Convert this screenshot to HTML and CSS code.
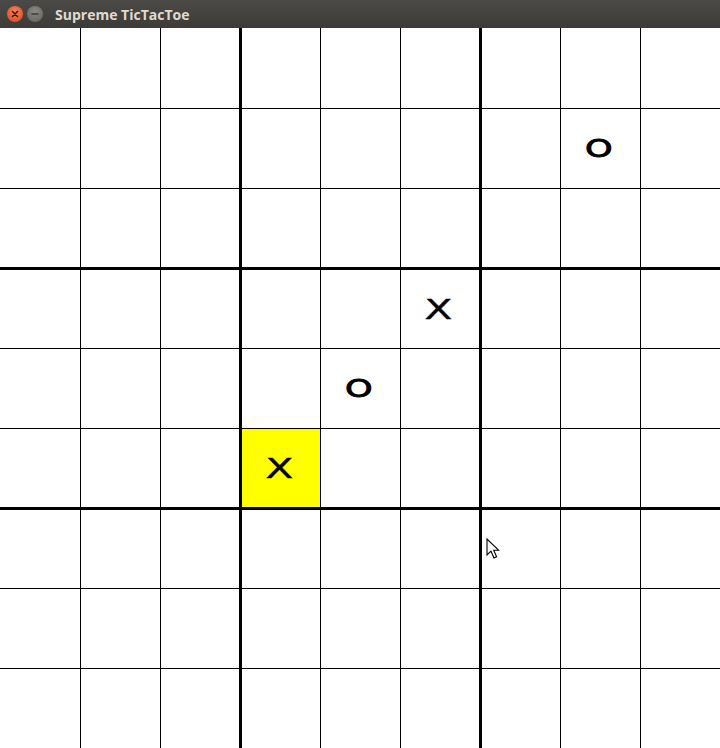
FILE: index.html
```html
<!DOCTYPE html>
<html>
<head>
<meta charset="utf-8">
<title>Supreme TicTacToe</title>
<link rel="stylesheet" href="styles.css">
</head>
<body>
<div class="window">
  <div class="titlebar">
    <div class="btn close"><svg width="16" height="16" viewBox="0 0 16 16"><path d="M5.5 5.5 L10.5 10.5 M10.5 5.5 L5.5 10.5" stroke="#3a1a10" stroke-width="1.6" stroke-linecap="round"/></svg></div>
    <div class="btn min"><svg width="16" height="16" viewBox="0 0 16 16"><path d="M5 8 H11" stroke="#3c3b37" stroke-width="1.6" stroke-linecap="round"/></svg></div>
    <div class="title">Supreme TicTacToe</div>
  </div>
  <div class="board">
    <div class="row"><div class="c"></div><div class="c"></div><div class="c pre"></div><div class="c thick"></div><div class="c"></div><div class="c pre"></div><div class="c thick"></div><div class="c"></div><div class="c"></div></div>
    <div class="row r"><div class="c"></div><div class="c"></div><div class="c pre"></div><div class="c thick"></div><div class="c"></div><div class="c pre"></div><div class="c thick"></div><div class="c"><span class="o">O</span></div><div class="c"></div></div>
    <div class="row r pre"><div class="c"></div><div class="c"></div><div class="c pre"></div><div class="c thick"></div><div class="c"></div><div class="c pre"></div><div class="c thick"></div><div class="c"></div><div class="c"></div></div>
    <div class="row thick"><div class="c"></div><div class="c"></div><div class="c pre"></div><div class="c thick"></div><div class="c"></div><div class="c pre"><span class="x">X</span></div><div class="c thick"></div><div class="c"></div><div class="c"></div></div>
    <div class="row r"><div class="c"></div><div class="c"></div><div class="c pre"></div><div class="c thick"></div><div class="c"><span class="o">O</span></div><div class="c pre"></div><div class="c thick"></div><div class="c"></div><div class="c"></div></div>
    <div class="row r pre"><div class="c"></div><div class="c"></div><div class="c pre"></div><div class="c thick hl"><span class="x">X</span></div><div class="c"></div><div class="c pre"></div><div class="c thick"></div><div class="c"></div><div class="c"></div></div>
    <div class="row thick"><div class="c"></div><div class="c"></div><div class="c pre"></div><div class="c thick"></div><div class="c"></div><div class="c pre"></div><div class="c thick"></div><div class="c"></div><div class="c"></div></div>
    <div class="row r"><div class="c"></div><div class="c"></div><div class="c pre"></div><div class="c thick"></div><div class="c"></div><div class="c pre"></div><div class="c thick"></div><div class="c"></div><div class="c"></div></div>
    <div class="row r"><div class="c"></div><div class="c"></div><div class="c pre"></div><div class="c thick"></div><div class="c"></div><div class="c pre"></div><div class="c thick"></div><div class="c"></div><div class="c"></div></div>
  </div>
  <svg class="cursor" width="14" height="22" viewBox="0 0 14 22"><path d="M1 1 L1 17 L5 13.2 L8 20 L10.6 18.8 L7.7 12.3 L12.8 12.3 Z" fill="#fff" stroke="#000" stroke-width="1.1" stroke-linejoin="miter"/></svg>
</div>
</body>
</html>
```
FILE: styles.css
```css
html, body {
  margin: 0;
  padding: 0;
  background: #ffffff;
}
.window {
  position: relative;
  width: 720px;
  height: 748px;
  overflow: hidden;
}
.titlebar {
  height: 28px;
  box-sizing: border-box;
  background: linear-gradient(#4b4a46, #3c3b37);
  display: flex;
  align-items: center;
  padding-left: 7px;
  gap: 4px;
}
.btn {
  width: 16px;
  height: 16px;
  border-radius: 50%;
  display: flex;
  align-items: center;
  justify-content: center;
}
.btn svg { display: block; }
.close {
  background: radial-gradient(circle at 50% 35%, #f4825b, #e5552a 70%, #c8431d);
}
.min {
  background: radial-gradient(circle at 50% 35%, #8a8984, #6d6c67 70%, #5d5c57);
}
.title {
  margin-left: 8px;
  font-family: "Open Sans", "DejaVu Sans", sans-serif;
  font-weight: 700;
  font-size: 14px;
  color: #dfdbd2;
}
.board {
  display: flex;
  flex-direction: column;
  width: 720px;
  height: 720px;
}
.row {
  display: flex;
  height: 80px;
  box-sizing: border-box;
}
.row.r { border-top: 1px solid #000; }
.row.pre { border-bottom: 1px solid #000; }
.row.thick { border-top: 2px solid #000; }
.c {
  width: 80px;
  box-sizing: border-box;
  display: flex;
  align-items: center;
  justify-content: center;
  padding-right: 4px;
  background: #fff;
}
.c + .c { border-left: 1px solid #000; }
.c.pre { border-right: 1px solid #000; }
.c.thick { border-left: 2px solid #000; }
.c.hl { background: #ffff00; }
.x, .o {
  display: inline-block;
  color: #000;
  font-family: "DejaVu Sans", sans-serif;
  line-height: 1;
}
.x {
  font-size: 27px;
  transform: scaleX(1.5);
  -webkit-text-stroke: 0.4px #000;
}
.o {
  font-size: 25px;
  transform: scaleX(1.4);
  -webkit-text-stroke: 0.9px #000;
}
.cursor {
  position: absolute;
  left: 486px;
  top: 538px;
}
```
